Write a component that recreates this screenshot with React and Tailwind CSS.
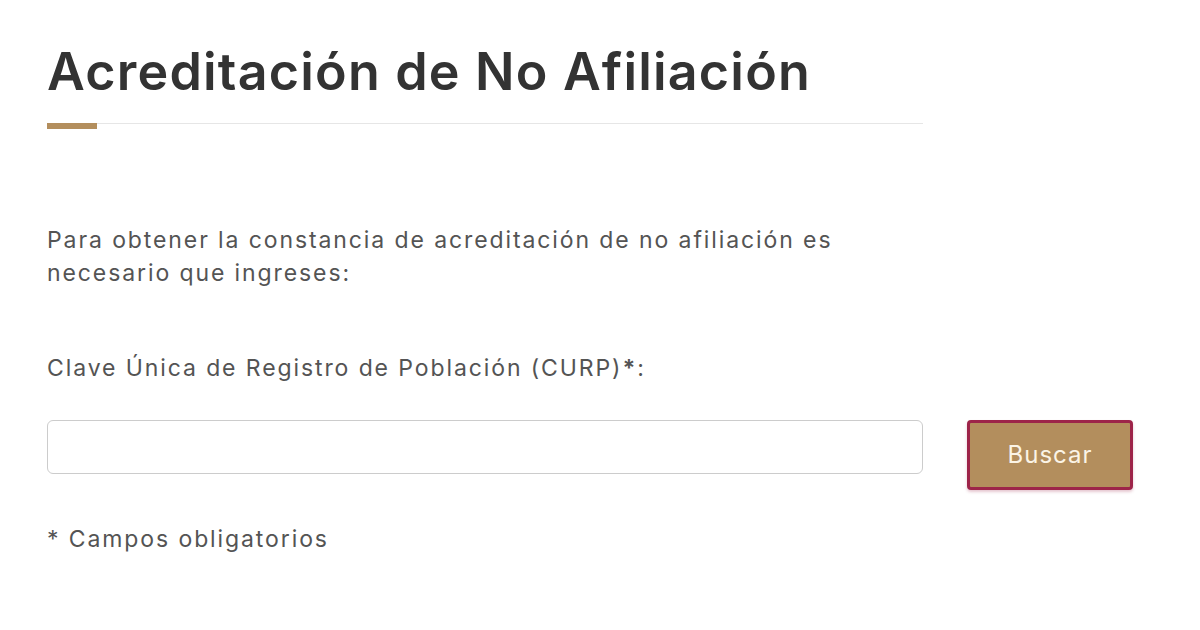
import React from 'react';

export default function App() {
  return (
    <div className="w-[1200px] h-[630px] bg-white overflow-hidden" style={{ fontFamily: 'Inter, "Open Sans", sans-serif' }}>
      <div className="pl-[47px] pt-[40px]">
        <div className="w-[876px]">
          <h1 className="text-[52px] leading-[64px] font-semibold text-[#333333] tracking-[1.2px]">
            Acreditación de No Afiliación
          </h1>
          <div className="relative mt-[19px] h-px bg-[#e6e6e6]">
            <div className="absolute left-0 top-0 w-[50px] h-[6px] bg-[#b38e5d]" />
          </div>
        </div>

        <p className="mt-[100px] w-[860px] text-[23px] leading-[33px] text-[#545454] tracking-[1.9px]">
          Para obtener la constancia de acreditación de no afiliación es necesario que ingreses:
        </p>

        <label className="block mt-[62px] text-[23px] leading-[33px] text-[#545454] tracking-[1.9px]">
          Clave Única de Registro de Población (CURP)<span className="font-bold">*</span>:
        </label>

        <div className="flex items-start mt-[35px]">
          <input
            type="text"
            className="w-[876px] h-[54px] rounded-[6px] border border-[#cccccc] px-4 text-[20px] outline-none"
          />
          <button className="ml-[44px] w-[166px] h-[70px] rounded-[4px] bg-[#b38e5d] border-[3px] border-[#9d2449] text-[#fbf4e6] text-[24px] tracking-[1px] shadow-[0_2px_3px_rgba(157,36,73,0.25)]">
            Buscar
          </button>
        </div>

        <p className="mt-[33px] text-[23px] leading-[33px] text-[#545454] tracking-[1.9px]">
          * Campos obligatorios
        </p>
      </div>
    </div>
  );
}
